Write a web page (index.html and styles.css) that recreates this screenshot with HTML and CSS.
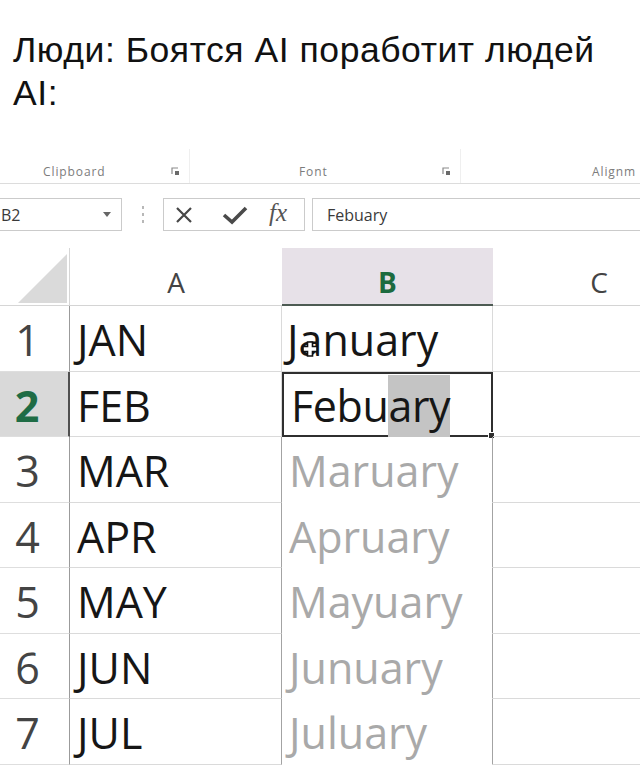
FILE: index.html
```html
<!DOCTYPE html>
<html lang="ru">
<head>
<meta charset="utf-8">
<title>AI Excel</title>
<link rel="stylesheet" href="styles.css">
</head>
<body>
<div class="caption">
  <div>Люди: Боятся AI поработит людей</div>
  <div>AI:</div>
</div>

<div class="ribbon">
  <div class="group g1">
    <span class="glabel">Clipboard</span>
    <svg class="launcher" width="9" height="9" viewBox="0 0 9 9"><path d="M1 7V1H7" fill="none" stroke="#8a8a8a" stroke-width="1.2"/><rect x="4" y="4" width="4" height="4" fill="#6a6a6a"/></svg>
  </div>
  <div class="group g2">
    <span class="glabel">Font</span>
    <svg class="launcher" width="9" height="9" viewBox="0 0 9 9"><path d="M1 7V1H7" fill="none" stroke="#8a8a8a" stroke-width="1.2"/><rect x="4" y="4" width="4" height="4" fill="#6a6a6a"/></svg>
  </div>
  <div class="group g3">
    <span class="glabel">Alignm</span>
  </div>
</div>

<div class="fbar">
  <div class="namebox">
    <span class="nametext">B2</span>
    <svg width="8" height="5" viewBox="0 0 8 5"><path d="M0 0H8L4 5Z" fill="#666"/></svg>
  </div>
  <div class="dots"><i></i><i></i><i></i></div>
  <div class="fxbox">
    <svg class="ico-x" width="18" height="18" viewBox="0 0 18 18"><path d="M2 2L16 16M16 2L2 16" stroke="#474747" stroke-width="2.2" fill="none"/></svg>
    <svg class="ico-ok" width="26" height="20" viewBox="0 0 26 20"><path d="M2 10L10 17L24 3" stroke="#4a4a4a" stroke-width="3.6" fill="none"/></svg>
    <span class="fx">fx</span>
  </div>
  <div class="finput">Febuary</div>
</div>

<div class="sheet">
  <div class="corner"><svg width="49" height="49" viewBox="0 0 49 49"><path d="M0 49L49 0V49Z" fill="#dadada"/></svg></div>
  <div class="colhead">A</div>
  <div class="colhead active">B</div>
  <div class="colhead">C</div>

  <div class="rowhead">1</div>
  <div class="cell">JAN</div>
  <div class="cell b1">January
    <svg class="cursor" width="16" height="16" viewBox="0 0 16 16"><path d="M5.5 1H10.5V5.5H15V10.5H10.5V15H5.5V10.5H1V5.5H5.5Z" fill="#fff" stroke="#111" stroke-width="1.6"/></svg>
  </div>
  <div class="cell"></div>

  <div class="rowhead active">2</div>
  <div class="cell">FEB</div>
  <div class="cell b2">Febu<span class="sel">ary</span></div>
  <div class="cell"></div>

  <div class="rowhead">3</div>
  <div class="cell edge">MAR</div>
  <div class="cell preview">Maruary</div>
  <div class="cell"></div>

  <div class="rowhead">4</div>
  <div class="cell edge">APR</div>
  <div class="cell preview">Apruary</div>
  <div class="cell"></div>

  <div class="rowhead">5</div>
  <div class="cell edge">MAY</div>
  <div class="cell preview">Mayuary</div>
  <div class="cell"></div>

  <div class="rowhead">6</div>
  <div class="cell edge">JUN</div>
  <div class="cell preview">Junuary</div>
  <div class="cell"></div>

  <div class="rowhead">7</div>
  <div class="cell edge">JUL</div>
  <div class="cell preview">Juluary</div>
  <div class="cell"></div>
</div>
</body>
</html>
```

FILE: styles.css
```css
html, body {
  margin: 0;
  padding: 0;
  background: #fff;
  overflow: hidden;
}
body {
  width: 640px;
  height: 769px;
}

.caption {
  padding: 29px 0 0 13px;
  font: 35.5px/43px "Liberation Sans", Arial, sans-serif;
  letter-spacing: 0.55px;
  color: #111;
  white-space: nowrap;
}

.ribbon {
  display: flex;
  height: 34px;
  margin-top: 34px;
  border-bottom: 1px solid #dcdcdc;
  font: 12px/16px "Open Sans", sans-serif;
  letter-spacing: 0.9px;
  color: #7c7c7c;
}
.group {
  display: flex;
  align-items: flex-end;
  flex-shrink: 0;
  box-sizing: border-box;
  padding-bottom: 3px;
  border-right: 1px solid #efefef;
}
.g1 { width: 190px; padding-left: 43px; }
.g2 { width: 271px; padding-left: 109px; }
.g3 {
  flex: 1 1 0;
  min-width: 0;
  padding-left: 131px;
  border-right: none;
  white-space: nowrap;
  overflow: hidden;
}
.launcher {
  margin-left: auto;
  margin-right: 9px;
  margin-bottom: 4px;
}

.fbar {
  display: flex;
  height: 33px;
  margin-top: 14px;
  font: 16px "Open Sans", sans-serif;
  color: #3a3a3a;
}
.namebox {
  width: 123px;
  margin-left: -1px;
  box-sizing: border-box;
  border: 1px solid #cbcbcb;
  display: flex;
  align-items: center;
  justify-content: space-between;
  padding-right: 10px;
}
.nametext { margin-left: 1px; }
.dots {
  width: 41px;
  display: flex;
  flex-direction: column;
  align-items: center;
  justify-content: center;
  gap: 4px;
}
.dots i {
  display: block;
  width: 2px;
  height: 3px;
  background: #b8b8b8;
}
.fxbox {
  width: 142px;
  box-sizing: border-box;
  border: 1px solid #cbcbcb;
  display: flex;
  align-items: center;
  padding-left: 11px;
}
.ico-ok { margin-left: 29px; }
.fx {
  margin-left: 21px;
  font: italic 25px "Liberation Serif", serif;
  color: #555;
  margin-top: -3px;
}
.finput {
  flex: 1;
  margin-left: 7px;
  box-sizing: border-box;
  border: 1px solid #cbcbcb;
  border-right: none;
  padding-left: 14px;
  display: flex;
  align-items: center;
}

.sheet {
  display: grid;
  grid-template-columns: 70px 212px 211px 212px;
  grid-template-rows: 58px repeat(7, 65.5px);
  width: 705px;
  margin-top: 17px;
  font-family: "Open Sans", sans-serif;
}
.sheet > div { box-sizing: border-box; }

.corner {
  display: flex;
  align-items: flex-end;
  justify-content: flex-end;
  padding: 0 2px 2px 0;
  border-right: 1px solid #d6d6d6;
  border-bottom: 1px solid #d6d6d6;
}

.colhead {
  font-size: 28px;
  line-height: 38px;
  padding-top: 15px;
  text-align: center;
  color: #444;
  border-bottom: 1px solid #d4d4d4;
}
.colhead.active {
  background: #e7e1e8;
  color: #1d6b3f;
  font-weight: 700;
  border-bottom: 2px solid #4d5b53;
}

.rowhead {
  font-size: 43px;
  line-height: 62px;
  padding-top: 3px;
  padding-right: 14px;
  text-align: center;
  color: #444;
  border-right: 1px solid #9b9b9b;
  border-bottom: 1px solid #dedede;
}
.rowhead.active {
  background: #d9d9d9;
  color: #1f6c45;
  font-weight: 700;
  border-right: 2px solid #505050;
}

.cell {
  position: relative;
  font-size: 43px;
  line-height: 62px;
  padding: 3px 0 0 7px;
  color: #161616;
  white-space: nowrap;
  border-right: 1px solid #dadada;
  border-bottom: 1px solid #dadada;
}
.cell.b1 { padding-left: 5px; }
.cell.edge { border-right-color: #a3a3a3; }
.cell.b2 {
  border: 2px solid #2f2f2f;
  padding: 1px 0 0 7px;
  line-height: 62px;
  letter-spacing: -0.4px;
}
.cell.b2::after {
  content: "";
  position: absolute;
  right: -4px;
  bottom: -4px;
  width: 5px;
  height: 5px;
  background: #2f2f2f;
  border: 1px solid #fff;
}
.sel {
  display: inline-block;
  background: #c4c4c4;
}
.cell.preview {
  color: #a9a9a9;
  border-right-color: #a3a3a3;
  border-bottom-color: transparent;
}
.cursor {
  position: absolute;
  left: 20px;
  top: 35px;
}
```
